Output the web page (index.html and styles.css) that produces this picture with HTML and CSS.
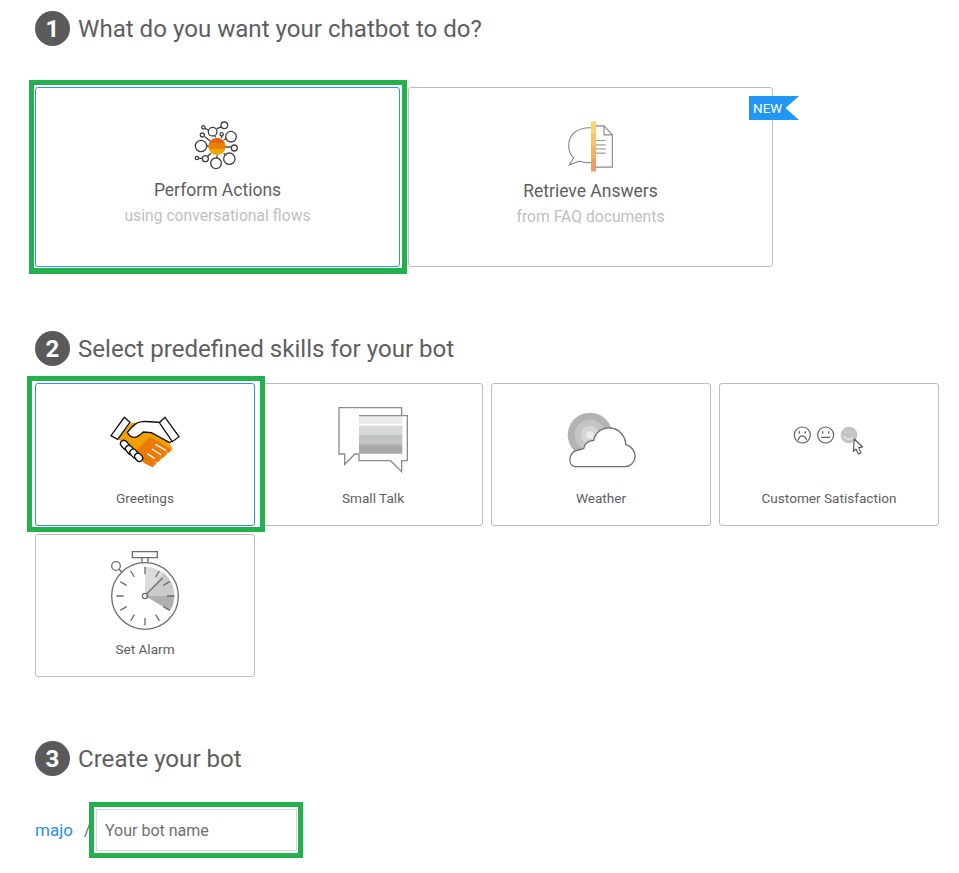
FILE: index.html
```html
<!DOCTYPE html>
<html lang="en">
<head>
<meta charset="utf-8">
<title>Create chatbot</title>
<link rel="stylesheet" href="styles.css">
</head>
<body>
<main class="page">
  <section class="step step-one">
    <h2 class="step-title"><span class="step-num">1</span>What do you want your chatbot to do?</h2>
    <div class="type-row">
      <div class="type-card is-selected">
        <span class="mark mark-type"></span>
        <svg class="type-icon" viewBox="2 0 195 180">
          <defs>
            <linearGradient id="sun" x1="0" y1="0" x2="0" y2="1">
              <stop offset="0" stop-color="#e5640f"/><stop offset=".33" stop-color="#e5640f"/>
              <stop offset=".33" stop-color="#ea8005"/><stop offset=".66" stop-color="#ea8005"/>
              <stop offset=".66" stop-color="#f0a500"/><stop offset="1" stop-color="#f0a500"/>
            </linearGradient>
          </defs>
          <g fill="none" stroke="#444" stroke-width="4">
            <path d="M68 90h6M122 93h20M118 72l10-6M112 66V60M93 64V60M78 76l-16-14M62 37l10 5M97 38l14-5M118 112l8 6M98 118v8M80 112l-11 10M54 127h-11"/>
            <circle cx="50" cy="90" r="17"/><circle cx="140" cy="62" r="16"/><circle cx="120" cy="28" r="10"/>
            <circle cx="85" cy="47" r="13"/><circle cx="57" cy="34" r="5"/><circle cx="54" cy="57" r="6"/>
            <circle cx="112" cy="55" r="5"/><circle cx="150" cy="96" r="9"/><circle cx="135" cy="128" r="17"/>
            <circle cx="95" cy="142" r="16"/><circle cx="63" cy="128" r="9"/><circle cx="38" cy="126" r="5"/>
          </g>
          <circle cx="98" cy="91" r="26" fill="url(#sun)"/>
        </svg>
        <h3 class="type-name">Perform Actions</h3>
        <p class="type-sub">using conversational flows</p>
      </div>
      <div class="type-card type-card-alt">
        <span class="new-badge">NEW</span>
        <svg class="type-icon" viewBox="3 0 180 180">
          <defs>
            <linearGradient id="bar" x1="0" y1="0" x2="0" y2="1">
              <stop offset="0" stop-color="#fad46c"/><stop offset=".25" stop-color="#fad46c"/>
              <stop offset=".25" stop-color="#f8c566"/><stop offset=".5" stop-color="#f8c566"/>
              <stop offset=".5" stop-color="#f5b35f"/><stop offset=".75" stop-color="#f5b35f"/>
              <stop offset=".75" stop-color="#ef9a68"/><stop offset="1" stop-color="#ef9a68"/>
            </linearGradient>
          </defs>
          <g fill="none" stroke="#8a8a8a" stroke-width="3.4">
            <path d="M95 34C55 32 26 52 26 87c0 17 7 30 15 37l-13 21 30-11c11 4 24 5 37 4"/>
            <path d="M108 28h24l25 27v97h-49"/>
            <path d="M132 28v27h25"/>
            <path d="M108 72h29M108 85h29M108 97h29M108 110h29" stroke="#a0a0a0"/>
          </g>
          <rect x="93" y="15" width="15" height="150" fill="url(#bar)"/>
        </svg>
        <h3 class="type-name">Retrieve Answers</h3>
        <p class="type-sub">from FAQ documents</p>
      </div>
    </div>
  </section>

  <section class="step step-two">
    <h2 class="step-title"><span class="step-num">2</span>Select predefined skills for your bot</h2>
    <div class="skill-grid">
      <div class="skill-card is-selected">
        <span class="mark mark-skill"></span>
        <svg class="skill-icon" viewBox="-15 0 360 240">
          <path d="M124 83l-40 48 72 70 30-4 62-36-38-58-42-20z" fill="#f0a000"/>
          <path d="M180 125l66 40-12 10-10-6 8 7-14 14-10-7 8 7-14 13-10-6 8 8-12 12-25-12-28-34z" fill="#ec7a08"/>
          <path d="M196 148l32 18M186 162l28 18M172 176l22 15" stroke="#fff" stroke-width="4" fill="none"/>
          <path d="M112 112c16-18 24-30 44-32 20-2 40 2 54 2l38 54-9 7-55-30-24-2-18 14c-14 6-26-2-30-13z" fill="#fff" stroke="#111" stroke-width="4" stroke-linejoin="round"/>
          <g fill="#fff" stroke="#111" stroke-width="4">
            <path d="M103 67l17 15-37 51-20-11z"/>
            <path d="M225 67l42 58-20 15-39-57z"/>
            <rect x="-15" y="-10" width="30" height="20" rx="10" transform="translate(105 150) rotate(48)"/>
            <rect x="-15" y="-10" width="30" height="20" rx="10" transform="translate(120 165) rotate(48)"/>
            <rect x="-15" y="-10" width="30" height="20" rx="10" transform="translate(133 176) rotate(48)"/>
            <rect x="-13" y="-10" width="26" height="20" rx="10" transform="translate(146 187) rotate(48)"/>
          </g>
        </svg>
        <span class="skill-name">Greetings</span>
      </div>
      <div class="skill-card">
        <svg class="skill-icon" viewBox="-21 0 360 240">
          <path d="M117 62h130v25H117z" fill="#e9eaeb"/><path d="M117 92h130v28H117z" fill="#d6d7d7"/>
          <path d="M117 120h130v28H117z" fill="#c2c3c3"/><path d="M117 148h130v28H117z" fill="#a9a9a9"/>
          <g fill="none" stroke="#8c8c8c" stroke-width="4">
            <path d="M117 177H105L74 208V177H57V38H245V62"/>
            <path d="M117 62H262V197H245V230L212 197H117V177"/>
          </g>
        </svg>
        <span class="skill-name">Small Talk</span>
      </div>
      <div class="skill-card">
        <svg class="skill-icon" viewBox="-30 -15 360 240">
          <circle cx="117" cy="105" r="67" fill="#b3b3b3"/><circle cx="117" cy="105" r="46" fill="#c4c4c4"/>
          <circle cx="117" cy="105" r="28" fill="#d6d6d6"/><circle cx="117" cy="105" r="11" fill="#ececec"/>
          <path d="M82 200H70c-24-10-14-48 14-50 6-2 10-4 14-4 2-14 14-26 30-24 4-24 26-42 52-38 26 3 44 26 44 50 18 4 30 22 28 38-2 16-14 28-30 28z" fill="#fff" stroke="#6f6f6f" stroke-width="4" stroke-linejoin="round"/>
        </svg>
        <span class="skill-name">Weather</span>
      </div>
      <div class="skill-card">
        <svg class="skill-icon" viewBox="-33 -60 360 240">
          <g fill="none" stroke="#5f5f5f" stroke-width="3.6" stroke-linecap="round">
            <circle cx="67" cy="60" r="24"/><circle cx="137" cy="60" r="24"/>
            <path d="M55 74c5-15 19-15 24 0"/>
            <path d="M125 67h24"/>
            <path d="M58 50v4M76 50v4M128 50v4M146 50v4" stroke-width="4"/>
          </g>
          <circle cx="207" cy="60" r="25" fill="#c4c4c4"/>
          <path d="M192 63c4 10 16 14 28 4M199 50v3M215 50v3" fill="none" stroke="#e8e8e8" stroke-width="4"/>
          <path d="M223 72l25 24-12 2 7 15-8 4-7-15-8 7z" fill="#fff" stroke="#555" stroke-width="3.4" stroke-linejoin="round"/>
        </svg>
        <span class="skill-name">Customer Satisfaction</span>
      </div>
      <div class="skill-card">
        <svg class="skill-icon" viewBox="-30 18 360 240">
          <path d="M150 168V80a88 88 0 0 1 88 88z" fill="#dcdcdc"/>
          <path d="M150 168l56-70a88 88 0 0 1 32 70z" fill="#cbcbcb"/>
          <path d="M150 168h88a88 88 0 0 1-13 44z" fill="#b0b0b0"/>
          <g fill="none" stroke="#6e6e6e" stroke-width="4">
            <circle cx="150" cy="168" r="100"/>
            <path d="M112 35h75v18h-75zM141 53v15M159 53v15"/>
            <circle cx="63" cy="78" r="13"/><path d="M72 88l10 10"/>
            <circle cx="150" cy="168" r="8"/>
            <path d="M155 161l48-47"/>
            <path d="M150 80v22M150 234v22M64 168h22M216 168h22M107 93l11 18M182 224l11 19M76 125l19 11M205 200l19 11M76 211l19-11M205 136l19-11M107 243l11-19M182 111l11-18"/>
          </g>
        </svg>
        <span class="skill-name">Set Alarm</span>
      </div>
    </div>
  </section>

  <section class="step step-three">
    <h2 class="step-title"><span class="step-num">3</span>Create your bot</h2>
    <div class="name-row">
      <a class="owner" href="#">majo</a>
      <span class="slash">/</span>
      <div class="name-field">
        <span class="mark mark-name"></span>
        <input class="name-input" type="text" placeholder="Your bot name">
      </div>
    </div>
  </section>
</main>
</body>
</html>
```
FILE: styles.css
```css
* { box-sizing: border-box; }
html, body { margin: 0; padding: 0; background: #fff; }
body { font-family: Roboto, "Noto Sans", sans-serif; color: #5a5a5a; }
.page { min-height: 873px; padding: 11px 20px 0 35px; }
.step-title { display: flex; align-items: center; gap: 8px; margin: 0; height: 35px; font-size: 24.1px; font-weight: 400; color: #5e5e5e; }
.step-num { flex: none; width: 35px; height: 35px; border-radius: 50%; background: #5a5a5a; color: #fff; font-size: 24px; font-weight: 700; display: flex; align-items: center; justify-content: center; }
.step-two { margin-top: 64px; }
.step-three { margin-top: 64px; }
.type-row { display: flex; gap: 8px; margin-top: 41px; }
.type-card { position: relative; flex: none; width: 365px; height: 180px; padding-top: 28px; border: 1px solid #bdbdbd; border-radius: 3px; text-align: center; background: #fff; }
.type-card.is-selected { border-color: #2f94e8; }
.type-icon { display: block; width: 65px; height: 60px; margin: 0 auto; overflow: visible; }
.type-card-alt .type-icon { width: 60px; height: 61px; }
.type-name { margin: 2px 0 0; font-size: 17.5px; line-height: 24px; font-weight: 400; color: #5e5e5e; }
.type-sub { margin: 4px 0 0; font-size: 15.7px; line-height: 20px; color: #bfbfbf; }
.new-badge { position: absolute; top: 8px; right: -27px; width: 50px; height: 24px; padding-left: 4px; background: #2196f3; color: #fff; font-size: 13.5px; line-height: 24px; text-align: left; clip-path: polygon(0 0, 100% 0, 73% 50%, 100% 100%, 0 100%); }
.skill-grid { display: grid; grid-template-columns: repeat(4, 220px); grid-auto-rows: 143px; gap: 8px; margin-top: 17px; }
.skill-card { position: relative; padding-top: 11px; border: 1px solid #bdbdbd; border-radius: 3px; text-align: center; background: #fff; }
.skill-card.is-selected { border-color: #2f94e8; }
.skill-icon { display: block; width: 120px; height: 80px; margin: 0 auto; overflow: visible; }
.skill-name { display: block; margin-top: 14px; font-size: 13.6px; line-height: 18px; color: #5e5e5e; }
.name-row { display: flex; align-items: center; margin-top: 33px; }
.owner { color: #2a8cf0; font-size: 17px; text-decoration: none; width: 49px; }
.slash { width: 12px; font-size: 16px; color: #666; }
.name-field { position: relative; }
.name-input { display: block; width: 201px; height: 42px; padding: 0 8px; border: 1px solid #d9d9d9; font: 16px Roboto, "Noto Sans", sans-serif; color: #6a6a6a; outline: none; }
.name-input::placeholder { color: #6f6f6f; opacity: 1; }
.mark { position: absolute; border: 5px solid #22b14c; pointer-events: none; z-index: 1; }
.mark-type { left: -7px; top: -8px; width: 378px; height: 194px; border-width: 5px 5px 6px; }
.mark-skill { left: -9px; top: -8px; width: 238px; height: 156px; }
.mark-name { left: -7px; top: -7px; width: 214px; height: 56px; }
```
